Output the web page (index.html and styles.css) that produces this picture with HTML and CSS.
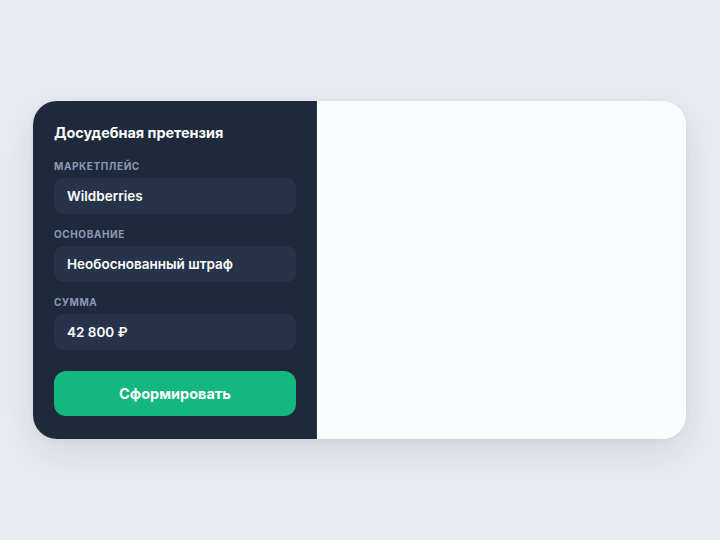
FILE: index.html
```html
<!DOCTYPE html>
<html lang="ru">
<head>
<meta charset="utf-8">
<link rel="stylesheet" href="styles.css">
</head>
<body>
<main class="stage">
  <section class="card">
    <form class="panel">
      <h1 class="title">Досудебная претензия</h1>
      <div class="field">
        <div class="label">Маркетплейс</div>
        <div class="input">Wildberries</div>
      </div>
      <div class="field">
        <div class="label">Основание</div>
        <div class="input">Необоснованный штраф</div>
      </div>
      <div class="field">
        <div class="label">Сумма</div>
        <div class="input">42 800 ₽</div>
      </div>
      <button type="button" class="btn">Сформировать</button>
    </form>
    <div class="preview"></div>
  </section>
</main>
</body>
</html>
```
FILE: styles.css
```css
* { box-sizing: border-box; }
html, body { margin: 0; height: 100%; }
body {
  background: #e8ebf0;
  font-family: Inter, "Noto Sans", sans-serif;
}
.stage {
  width: 720px;
  height: 540px;
  padding: 101px 34px 0 33px;
}
.card {
  display: flex;
  width: 653px;
  height: 338px;
  border-radius: 24px;
  overflow: hidden;
  background: #fafcff;
  box-shadow: 0 14px 40px rgba(30, 41, 59, 0.10), 0 2px 6px rgba(30, 41, 59, 0.05);
}
.panel {
  width: 284px;
  flex: none;
  background: #1e293b;
  border-right: 1px solid #2c3850;
  padding: 23px 20px 0 21px;
  display: flex;
  flex-direction: column;
  margin: 0;
}
.title {
  margin: 0 0 18px;
  font-size: 14.4px;
  line-height: 18px;
  font-weight: 700;
  color: #ffffff;
}
.field {
  display: flex;
  flex-direction: column;
  gap: 6px;
  margin-bottom: 14px;
}
.field:last-of-type { margin-bottom: 21px; }
.label {
  font-size: 10px;
  line-height: 12px;
  font-weight: 700;
  letter-spacing: 0.06em;
  text-transform: uppercase;
  color: #8a9ab4;
}
.input {
  height: 36px;
  border-radius: 9px;
  background: #27334a;
  color: #ffffff;
  font-size: 13.5px;
  font-weight: 600;
  display: flex;
  align-items: center;
  padding-left: 13px;
}
.btn {
  height: 45px;
  border: 0;
  border-radius: 12px;
  background: #14b77f;
  color: #ffffff;
  font-family: inherit;
  font-size: 14.5px;
  font-weight: 700;
}
.preview {
  flex: 1;
  background: #fafcff;
}
```
